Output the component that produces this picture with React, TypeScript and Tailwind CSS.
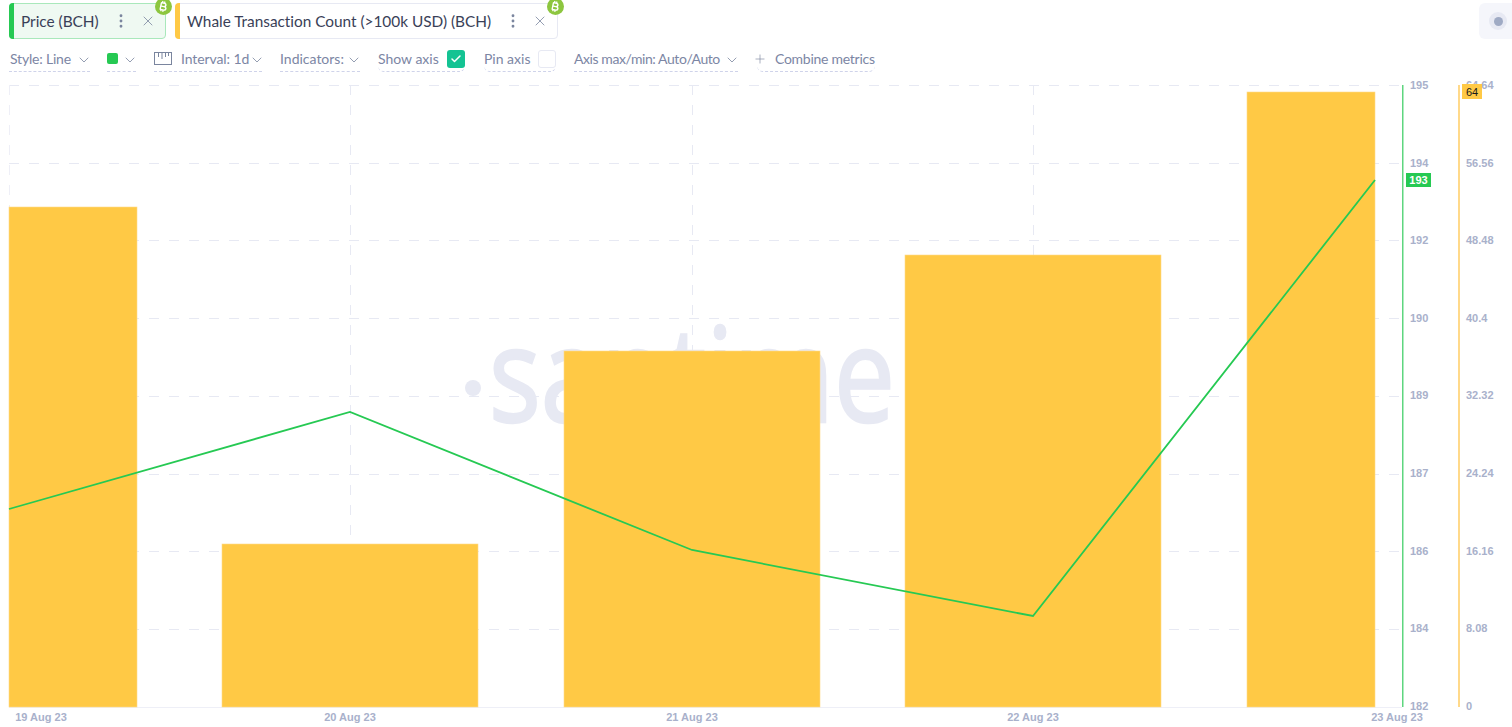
import { ChevronDown, Check, Plus, X, EllipsisVertical } from "lucide-react";
import { FaBitcoinSign } from "react-icons/fa6";
import type { ReactNode } from "react";

function Tag({ label, accent, bg, border, width }: { label: string; accent: string; bg: string; border: string; width: string }) {
  return (
    <div className={`relative flex h-9 items-center rounded-[4px] border pl-[11px] ${bg} ${border} ${width}`}>
      <span className={`absolute -left-px -top-px -bottom-px w-[5px] rounded-l-[4px] ${accent}`} />
      <span className="whitespace-nowrap pt-px text-[15.4px] tracking-[-0.02px] text-[#3a3f58]">{label}</span>
      <span className="ml-auto flex items-center">
        <EllipsisVertical size={18} strokeWidth={1.8} className="text-[#7a859e]" />
        <X size={16} strokeWidth={1.2} className="ml-[10px] mr-[9px] text-[#7a859e]" />
      </span>
      <span className="absolute -right-[7px] -top-[6px] flex h-[17px] w-[17px] items-center justify-center rounded-full bg-[#8dc63f]">
        <FaBitcoinSign size={11} className="rotate-[12deg] text-white" />
      </span>
    </div>
  );
}

function Item({ children, className = "" }: { children: ReactNode; className?: string }) {
  return (
    <div className={`flex h-[22px] items-center whitespace-nowrap border-b border-dashed border-[#cfd3ea] pb-[4px] text-[14px] text-[#7c86a4] ${className}`}>
      {children}
    </div>
  );
}

const Chev = () => <ChevronDown size={16} strokeWidth={1.2} className="-mr-[2px] ml-auto mt-[2px] shrink-0 text-[#7a859e]" />;

const W = 1512;
const H = 649;
const off = 78;
const ys = [85, 163, 240, 318, 396, 474, 551, 629];
const bars = [
  [9, 137, 207],
  [222, 478, 544],
  [564, 820, 351],
  [905, 1161, 255],
  [1247, 1375, 92],
];
const left = ["195", "194", "192", "190", "189", "187", "186", "184", "182"];
const leftY = [85, 163, 240, 318, 395, 473, 551, 628, 706];
const right = ["64.64", "56.56", "48.48", "40.4", "32.32", "24.24", "16.16", "8.08", "0"];
const dates: [string, number][] = [
  ["19 Aug 23", 41],
  ["20 Aug 23", 350],
  ["21 Aug 23", 692],
  ["22 Aug 23", 1033],
  ["23 Aug 23", 1397],
];
const labelCls = "fill-[#a9b1cb] font-bold text-[11px]";

function Chart() {
  return (
    <svg width={W} height={H} viewBox={`0 ${off} ${W} ${H}`} className="block font-['Liberation_Sans',sans-serif]">
      <circle cx={473} cy={388} r={8} fill="#e7e9f3" />
      <text x={489} y={422} textLength={406} lengthAdjust="spacingAndGlyphs" fontSize={132} fontWeight={400} fill="#e7e9f3" stroke="#e7e9f3" strokeWidth={2.5} className="font-['Open_Sans',sans-serif]">
        santime
      </text>
      {ys.map((y) => (
        <line key={y} x1={9} x2={1402} y1={y + 0.5} y2={y + 0.5} stroke="#e7e9f3" strokeWidth={1} strokeDasharray="10 10" />
      ))}
      {[350, 692, 1033].map((x) => (
        <line key={x} x1={x + 0.5} x2={x + 0.5} y1={85} y2={707} stroke="#e7e9f3" strokeWidth={1} strokeDasharray="10 10" />
      ))}
      <line x1={9.5} x2={9.5} y1={85} y2={707} stroke="#eeeff7" strokeWidth={1} strokeDasharray="10 10" />
      <line x1={9} x2={1402} y1={707.5} y2={707.5} stroke="#eeeff7" strokeWidth={1} />
      {bars.map(([a, b, t]) => (
        <rect key={a} x={a} y={t} width={b - a} height={707 - t} fill="#ffc945" stroke="#ffd98a" strokeWidth={0.6} />
      ))}
      <polyline points="9,509 350,412 692,550 1033,616 1375,180" fill="none" stroke="#26c953" strokeWidth={1.8} />
      <rect x={1402} y={85} width={1.5} height={622} fill="#5ed67f" />
      <rect x={1458} y={85} width={2} height={622} fill="#ffd98a" />
      {left.map((t, i) => (
        <text key={t} x={1410} y={leftY[i] + 4} className={labelCls}>{t}</text>
      ))}
      {right.map((t, i) => (
        <text key={t} x={1466} y={leftY[i] + 4} className={labelCls}>{t}</text>
      ))}
      {dates.map(([t, x]) => (
        <text key={t} x={x} y={721} textAnchor="middle" className={labelCls}>{t}</text>
      ))}
      <rect x={1406} y={173} width={25} height={14} fill="#26c953" />
      <text x={1418.5} y={184} textAnchor="middle" className="fill-white font-bold text-[11px]">193</text>
      <rect x={1462} y={84} width={20} height={15} fill="#ffc945" />
      <text x={1472} y={95.5} textAnchor="middle" className="fill-[#1a1a1a] text-[11px]">64</text>
    </svg>
  );
}

export default function App() {
  return (
    <div className="h-[727px] w-[1512px] overflow-hidden bg-white font-['Lato','Open_Sans',sans-serif]">
      <div className="flex h-[50px] items-start pl-[9px] pt-[3px]">
        <Tag label="Price (BCH)" accent="bg-[#26c953]" bg="bg-[#eff9f2]" border="border-[#a9e8bb]" width="w-[157px]" />
        <div className="ml-[9px]">
          <Tag label="Whale Transaction Count (>100k USD) (BCH)" accent="bg-[#ffc945]" bg="bg-white" border="border-[#e7e9f3]" width="w-[383px]" />
        </div>
        <div className="ml-auto flex h-9 w-[33px] items-center justify-start rounded-l-[6px] bg-[#f5f6fb] pl-[10px]">
          <span className="flex h-[18px] w-[18px] items-center justify-center rounded-full bg-[#e7e9f3]">
            <span className="h-[9px] w-[9px] rounded-full bg-[#9faac4]" />
          </span>
        </div>
      </div>
      <div className="flex h-[28px] items-start pl-[9px]">
        <Item className="w-[81px] pl-px tracking-[-0.2px]">Style: Line<Chev /></Item>
        <Item className="ml-[17px] w-[29px]">
          <span className="h-[11px] w-[11px] rounded-[2px] bg-[#26c953]" />
          <Chev />
        </Item>
        <Item className="ml-[18px] w-[108px] tracking-[-0.1px]">
          <svg width={18} height={14} viewBox="0 0 18 14" fill="none" stroke="#7a859e" strokeWidth={1} className="mr-[9px] shrink-0">
            <rect x={0.5} y={0.5} width={17} height={12} />
            <path d="M4.500 1v4M8 1v6M11.500 1v4M14.500 1v3" />
          </svg>
          Interval: 1d<Chev />
        </Item>
        <Item className="ml-[18px] w-[80px]">Indicators:<Chev /></Item>
        <Item className="ml-[18px] w-[87px] rounded-b-[6px]">
          Show axis
          <span className="ml-auto flex h-[18px] w-[18px] items-center justify-center rounded-[3px] bg-[#14c393]">
            <Check size={12} strokeWidth={3} className="text-white" />
          </span>
        </Item>
        <Item className="ml-[19px] w-[72px] rounded-b-[6px]">
          Pin axis
          <span className="ml-auto h-[18px] w-[18px] rounded-[3px] border border-[#e7e9f3] bg-white" />
        </Item>
        <Item className="ml-[18px] w-[164px] tracking-[-0.43px]">Axis max/min: Auto/Auto<Chev /></Item>
        <Item className="ml-[19px] w-[118px] rounded-b-[6px] tracking-[-0.27px]">
          <Plus size={14} strokeWidth={1.1} className="-ml-[4px] mr-[8px] shrink-0 text-[#7a859e]" />
          Combine metrics
        </Item>
      </div>
      <Chart />
    </div>
  );
}
